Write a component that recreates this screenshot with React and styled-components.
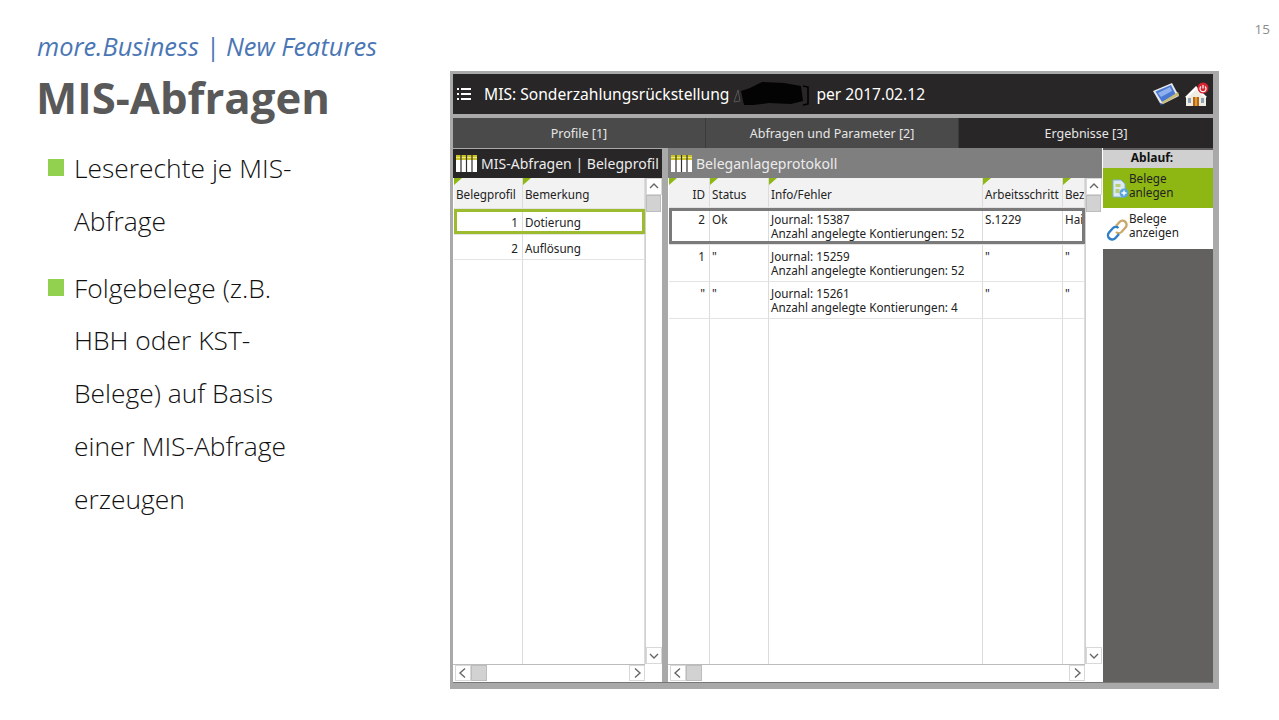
import styled, { createGlobalStyle } from "styled-components";

const GlobalStyle = createGlobalStyle`
  html, body { margin: 0; padding: 0; background: #fff; }
  #root { width: 1279px; height: 720px; overflow: hidden; }
`;

const appFont = `"Noto Sans", "Liberation Sans", sans-serif`;

function GridIcon() {
  return (
    <svg width="21" height="17" viewBox="0 0 21 17" style={{ flex: "none" }}>
      <rect width="21" height="17" fill="#fff" />
      <rect width="21" height="5" fill="#c9c22a" />
      <path d="M0 2.500h21" stroke="#f0ea70" />
      <path d="M5 0v17M10.500 0v17M16 0v17" stroke="#333" strokeWidth="1.2" />
    </svg>
  );
}

function MenuIcon() {
  return (
    <svg width="14" height="12" viewBox="0 0 14 12" fill="#fff">
      <rect x="0" y="0" width="2" height="2" />
      <rect x="0" y="5" width="2" height="2" />
      <rect x="0" y="10" width="2" height="2" />
      <rect x="4" y="0" width="10" height="2" />
      <rect x="4" y="5" width="10" height="2" />
      <rect x="4" y="10" width="10" height="2" />
    </svg>
  );
}

function Scribble() {
  return (
    <svg width="78" height="24" viewBox="0 0 78 24">
      <path d="M1 20 5 8l2 11z" fill="none" stroke="#555" />
      <path d="M11 23 8 9l9-3 12-6 22 1 17 3 2 15-12 3-22-1-16 2z" fill="#030303" />
      <path d="M70 4l5 1v17l-5 1" fill="none" stroke="#000" strokeWidth="1.500" />
    </svg>
  );
}

function PictureIcon() {
  return (
    <svg width="26" height="24" viewBox="0 0 26 24">
      <path d="M0 9 19 1l7 13-18 9z" fill="#e6e7ea" />
      <path d="M2.500 9.500 18 3l5 10-14 7z" fill="#4a78d2" />
      <path d="M5 11 17 5l2 4-11 6z" fill="#8fb0ec" />
      <path d="M9 20 25 10l1 3-16 9z" fill="#c8bd74" />
      <path d="M6 21l3 3 2-2z" fill="#1c3f80" />
    </svg>
  );
}

function HomeIcon() {
  return (
    <svg width="24" height="25" viewBox="0 0 24 25">
      <path d="M11 5 1 15v9h20v-9z" fill="#efece2" />
      <path d="M11 4 0 15l2 1 9-8 9 8 2-1z" fill="#fff" />
      <rect x="8" y="15" width="6" height="9" fill="#b5661a" />
      <rect x="10" y="15" width="2" height="9" fill="#e59b2d" />
      <rect x="3" y="16" width="3" height="5" fill="#8fa4b4" />
      <rect x="16" y="16" width="3" height="5" fill="#8fa4b4" />
      <circle cx="18" cy="6" r="5.500" fill="#d9232e" />
      <path d="M16 4.500a3 3 0 1 0 4 0M18 3v3.500" stroke="#fff" fill="none" strokeWidth="1.200" />
    </svg>
  );
}

function DocIcon() {
  return (
    <svg width="17" height="19" viewBox="0 0 17 19">
      <path d="M1 1h8l4 4v13H1z" fill="#dce9f2" stroke="#7fb0d6" />
      <path d="M3.500 5h5v3h-5zM3.500 10h4v4h-4z" fill="#b9cf72" />
      <circle cx="12" cy="14" r="4.500" fill="#5aa5e0" />
      <path d="M12 11.500v5M9.500 14h5" stroke="#fff" strokeWidth="1.400" />
    </svg>
  );
}

function ChainIcon() {
  return (
    <svg width="23" height="22" viewBox="0 0 23 22" fill="none">
      <path d="M10 7 13.500 3a4 4 0 0 1 6 5.500l-4 4.500a4 4 0 0 1-5.500 0" stroke="#c9a96a" strokeWidth="2.400" />
      <path d="M13 15 9.500 19a4 4 0 0 1-6.500-5.500l4-4.500a4 4 0 0 1 5.500 0" stroke="#2f7fc8" strokeWidth="2.400" />
    </svg>
  );
}

function Chevron({ dir }) {
  const paths = {
    up: "M2 7l4-4 4 4",
    down: "M2 4l4 4 4-4",
    left: "M8 1.500 3 6l5 4.500",
    right: "M4 1.500 9 6l-5 4.500",
  };
  return (
    <svg width="12" height="12" viewBox="0 0 12 12" fill="none">
      <path d={paths[dir]} stroke="#666" strokeWidth="1.400" />
    </svg>
  );
}

const Slide = styled.div`
  width: 1279px;
  height: 720px;
  display: flex;
  align-items: flex-start;
  background: #fff;
  font-family: "Open Sans", sans-serif;
`;

const TextColumn = styled.div`
  width: 450px;
  flex: none;
  padding: 29px 0 0 37px;
  box-sizing: border-box;
`;

const Subtitle = styled.div`
  font-style: italic;
  font-size: 25.4px;
  line-height: 34px;
  color: #4a76b5;
  white-space: nowrap;
`;

const Title = styled.h1`
  margin: 4px 0 0 -1px;
  font-weight: 700;
  font-size: 43.7px;
  line-height: 60px;
  color: #595959;
`;

const BulletList = styled.ul`
  list-style: none;
  margin: 15px 0 0 11px;
  padding: 0;
`;

const Bullet = styled.li`
  display: flex;
  gap: 10px;
  margin-bottom: 14px;
  font-weight: 300;
  font-size: 26.4px;
  line-height: 52.8px;
  color: #111;
  white-space: nowrap;

  &::before {
    content: "";
    flex: none;
    width: 16px;
    height: 17px;
    margin-top: 17px;
    background: #92d050;
  }
`;

const Window = styled.div`
  width: 769px;
  height: 618px;
  margin-top: 71px;
  flex: none;
  box-sizing: border-box;
  padding: 3px 6px 6px 3px;
  background: #a9a9a9;
  display: flex;
  flex-direction: column;
  font-family: ${appFont};
`;

const TitleBar = styled.div`
  height: 44px;
  flex: none;
  box-sizing: border-box;
  border-bottom: 4px solid #a9a9a9;
  background: #282626;
  padding: 0 4px 0 4px;
  display: flex;
  align-items: center;
  color: #fff;
  font-size: 15.6px;
  white-space: nowrap;
`;

const MenuSlot = styled.span`
  display: flex;
  margin: 0 13px 0 0;
`;

const Redaction = styled.span`
  display: flex;
  margin: 0 5px 0 4px;
`;

const BarIcons = styled.div`
  margin-left: auto;
  display: flex;
  align-items: center;
  gap: 6px;
`;

const Tabs = styled.div`
  height: 30px;
  flex: none;
  display: grid;
  grid-template-columns: 252px 253px 1fr;
`;

const Tab = styled.div`
  display: flex;
  align-items: center;
  justify-content: center;
  font-size: 12.5px;
  color: #e6e6e6;
  background: ${(p) => (p.$active ? "#282626" : "#4a4a4a")};
  border-left: ${(p) => (p.$first ? "none" : "1px solid #3a3a3a")};
`;

const Panels = styled.div`
  flex: 1;
  min-height: 0;
  display: flex;
  background: #fff;
  border-bottom: 1px solid #777;
`;

const Panel = styled.div`
  width: ${(p) => p.$width}px;
  flex: none;
  display: flex;
  flex-direction: column;
`;

const PanelHeader = styled.div`
  height: 30px;
  flex: none;
  box-sizing: border-box;
  padding: 0 0 0 3px;
  display: flex;
  align-items: center;
  gap: 4px;
  background: ${(p) => (p.$dark ? "#282626" : "#7f7f7f")};
  border-top: 1px solid ${(p) => (p.$dark ? "#a9a9a9" : "#7f7f7f")};
  color: #ececec;
  font-size: 14px;
  letter-spacing: 0.02px;
  white-space: nowrap;
  overflow: hidden;
`;

const PanelSplit = styled.div`
  width: 6px;
  flex: none;
  background: #a9a9a9;
`;

const GridWrap = styled.div`
  flex: 1;
  min-height: 0;
  display: grid;
  grid-template-columns: 1fr 17px;
  grid-template-rows: 1fr 18px;
`;

const GridBody = styled.div`
  display: flex;
  flex-direction: column;
  min-width: 0;
  padding-left: 1px;
`;

const Row = styled.div`
  display: grid;
  grid-template-columns: ${(p) => p.$cols};
  height: ${(p) => p.$height}px;
  flex: ${(p) => (p.$fill ? 1 : "none")};
  box-sizing: border-box;
  background: ${(p) => (p.$head ? "#f2f2f2" : "#fff")};
  border-bottom: ${(p) => (p.$fill ? "none" : "1px solid #e3e3e3")};
  position: relative;
`;

const Selection = styled.div`
  position: absolute;
  inset: 0;
  border: 3px solid ${(p) => p.$color};
  pointer-events: none;
`;

const Cell = styled.div`
  box-sizing: border-box;
  padding: ${(p) => p.$top || 4}px ${(p) => (p.$right ? 4 : 2)}px 0 2px;
  border-right: 1px solid #dcdcdc;
  font-size: 11.7px;
  line-height: 14px;
  color: #222;
  text-align: ${(p) => (p.$right ? "right" : "left")};
  white-space: nowrap;
  overflow: hidden;
  position: relative;

  &::before {
    content: ${(p) => (p.$head ? '""' : "none")};
    position: absolute;
    left: 0;
    top: 0;
    width: 8px;
    height: 7px;
    background: #8fb714;
    clip-path: polygon(0 0, 100% 0, 0 100%);
  }
`;

const VScroll = styled.div`
  display: flex;
  flex-direction: column;
  background: #fff;
  border-left: 1px solid #d0d0d0;
`;

const ScrollButton = styled.div`
  width: 16px;
  height: ${(p) => p.$h || 17}px;
  flex: none;
  box-sizing: border-box;
  display: flex;
  align-items: center;
  justify-content: center;
  background: #fff;
  border: 1px solid #d8d8d8;
`;

const Thumb = styled.div`
  flex: none;
  width: ${(p) => p.$w}px;
  height: ${(p) => p.$h}px;
  background: #d2d2d2;
  border: 1px solid #bdbdbd;
  box-sizing: border-box;
`;

const Track = styled.div`
  flex: 1;
`;

const HScroll = styled.div`
  display: flex;
  align-items: stretch;
  padding-left: 2px;
  background: #fff;
  border-top: 1px solid #bcbcbc;
`;

const Corner = styled.div`
  background: #fff;
`;

const Sidebar = styled.div`
  flex: 1;
  display: flex;
  flex-direction: column;
  background: #626160;
  margin-left: 1px;
`;

const SideHead = styled.div`
  height: 18px;
  margin-top: 2px;
  padding-right: 12px;
  flex: none;
  background: #d0d0d0;
  text-align: center;
  font-size: 12px;
  font-weight: 700;
  line-height: 16px;
  color: #111;
`;

const SideItem = styled.div`
  height: ${(p) => p.$height}px;
  flex: none;
  box-sizing: border-box;
  padding: 3px 0 0 3px;
  display: flex;
  align-items: flex-start;
  background: ${(p) => (p.$active ? "#8fb714" : "#fff")};
  font-size: 11.7px;
  line-height: 14px;
  color: #222;
`;

const SideIcon = styled.span`
  width: 23px;
  margin: 8px 0 0 0;
  display: flex;
  justify-content: flex-end;
  flex: none;
`;

const PageNumber = styled.div`
  margin: 21px 9px 0 auto;
  font-size: 13.5px;
  line-height: 16px;
  color: #8c8c8c;
`;

const leftCols = "69px 1fr";
const rightCols = "41px 59px 214px 80px 1fr";

const protocolRows = [
  { id: "2", status: "Ok", journal: "15387", count: 52, step: "S.1229", ref: "Hai", selected: true },
  { id: "1", status: '"', journal: "15259", count: 52, step: '"', ref: '"' },
  { id: '"', status: '"', journal: "15261", count: 4, step: '"', ref: '"' },
];

function Scrollbars() {
  return (
    <>
      <VScroll>
        <ScrollButton>
          <Chevron dir="up" />
        </ScrollButton>
        <Thumb $w={15} $h={17} />
        <Track />
        <ScrollButton>
          <Chevron dir="down" />
        </ScrollButton>
      </VScroll>
      <HScroll>
        <ScrollButton $h={16}>
          <Chevron dir="left" />
        </ScrollButton>
        <Thumb $w={16} $h={16} />
        <Track />
        <ScrollButton $h={16}>
          <Chevron dir="right" />
        </ScrollButton>
      </HScroll>
      <Corner />
    </>
  );
}

export default function App() {
  return (
    <>
      <GlobalStyle />
      <Slide>
        <TextColumn>
          <Subtitle>more.Business | New Features</Subtitle>
          <Title>MIS-Abfragen</Title>
          <BulletList>
            <Bullet>
              <span>
                Leserechte je MIS-
                <br />
                Abfrage
              </span>
            </Bullet>
            <Bullet>
              <span>
                Folgebelege (z.B.
                <br />
                HBH oder KST-
                <br />
                Belege) auf Basis
                <br />
                einer MIS-Abfrage
                <br />
                erzeugen
              </span>
            </Bullet>
          </BulletList>
        </TextColumn>

        <Window>
          <TitleBar>
            <MenuSlot>
              <MenuIcon />
            </MenuSlot>
            <span>MIS: Sonderzahlungsrückstellung</span>
            <Redaction>
              <Scribble />
            </Redaction>
            <span>per 2017.02.12</span>
            <BarIcons>
              <PictureIcon />
              <HomeIcon />
            </BarIcons>
          </TitleBar>

          <Tabs>
            <Tab $first>Profile [1]</Tab>
            <Tab>Abfragen und Parameter [2]</Tab>
            <Tab $active>Ergebnisse [3]</Tab>
          </Tabs>

          <Panels>
            <Panel $width={209}>
              <PanelHeader $dark>
                <GridIcon />
                MIS-Abfragen | Belegprofil
              </PanelHeader>
              <GridWrap>
                <GridBody>
                  <Row $cols={leftCols} $height={31} $head>
                    <Cell $head $top={9}>Belegprofil</Cell>
                    <Cell $head $top={9}>Bemerkung</Cell>
                  </Row>
                  <Row $cols={leftCols} $height={26}>
                    <Cell $right $top={6}>1</Cell>
                    <Cell $top={6}>Dotierung</Cell>
                    <Selection $color="#9dbb2f" />
                  </Row>
                  <Row $cols={leftCols} $height={25}>
                    <Cell $right $top={6}>2</Cell>
                    <Cell $top={6}>Auflösung</Cell>
                  </Row>
                  <Row $cols={leftCols} $fill>
                    <Cell />
                    <Cell />
                  </Row>
                </GridBody>
                <Scrollbars />
              </GridWrap>
            </Panel>

            <PanelSplit />

            <Panel $width={434}>
              <PanelHeader>
                <GridIcon />
                Beleganlageprotokoll
              </PanelHeader>
              <GridWrap>
                <GridBody>
                  <Row $cols={rightCols} $height={30} $head>
                    <Cell $head $right $top={9}>ID</Cell>
                    <Cell $head $top={9}>Status</Cell>
                    <Cell $head $top={9}>Info/Fehler</Cell>
                    <Cell $head $top={9}>Arbeitsschritt</Cell>
                    <Cell $head $top={9}>Bezeichnung</Cell>
                  </Row>
                  {protocolRows.map((row) => (
                    <Row key={row.journal} $cols={rightCols} $height={37}>
                      <Cell $right>{row.id}</Cell>
                      <Cell>{row.status}</Cell>
                      <Cell>
                        Journal: {row.journal}
                        <br />
                        Anzahl angelegte Kontierungen: {row.count}
                      </Cell>
                      <Cell>{row.step}</Cell>
                      <Cell>{row.ref}</Cell>
                      {row.selected && <Selection $color="#7a7a7a" />}
                    </Row>
                  ))}
                  <Row $cols={rightCols} $fill>
                    <Cell />
                    <Cell />
                    <Cell />
                    <Cell />
                    <Cell />
                  </Row>
                </GridBody>
                <Scrollbars />
              </GridWrap>
            </Panel>

            <Sidebar>
              <SideHead>Ablauf:</SideHead>
              <SideItem $active $height={40}>
                <SideIcon>
                  <DocIcon />
                </SideIcon>
                <span>
                  Belege
                  <br />
                  anlegen
                </span>
              </SideItem>
              <SideItem $height={41}>
                <SideIcon>
                  <ChainIcon />
                </SideIcon>
                <span>
                  Belege
                  <br />
                  anzeigen
                </span>
              </SideItem>
            </Sidebar>
          </Panels>
        </Window>

        <PageNumber>15</PageNumber>
      </Slide>
    </>
  );
}
